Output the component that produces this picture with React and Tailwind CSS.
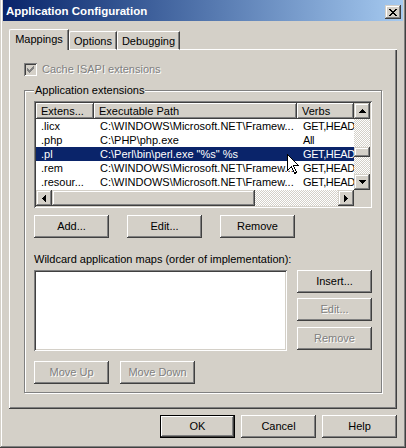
import React from "react";

const RAISED =
  "shadow-[inset_-1px_-1px_0_#404040,inset_1px_1px_0_#fff,inset_-2px_-2px_0_#808080]";
const SCROLLBTN =
  "shadow-[inset_-1px_-1px_0_#404040,inset_1px_1px_0_#d4d0c8,inset_-2px_-2px_0_#808080,inset_2px_2px_0_#fff]";
const SUNKEN =
  "shadow-[inset_1px_1px_0_#808080,inset_-1px_-1px_0_#fff,inset_2px_2px_0_#404040,inset_-2px_-2px_0_#d4d0c8]";
const CHECKER =
  "bg-[image:repeating-conic-gradient(#fff_0%_25%,#d4d0c8_0%_50%)] bg-[length:2px_2px]";
const DISABLED = "text-[#808080] [text-shadow:1px_1px_0_#fff]";

const rows = [
  [".licx", "C:\\WINDOWS\\Microsoft.NET\\Framew...", "GET,HEAD"],
  [".php", "C:\\PHP\\php.exe", "All"],
  [".pl", 'C:\\Perl\\bin\\perl.exe "%s" %s', "GET,HEAD"],
  [".rem", "C:\\WINDOWS\\Microsoft.NET\\Framew...", "GET,HEAD"],
  [".resour...", "C:\\WINDOWS\\Microsoft.NET\\Framew...", "GET,HEAD"],
];

const Btn = ({ children, disabled, def, className = "" }) => (
  <div
    className={`h-[23px] w-[75px] flex items-center justify-center ${RAISED} ${
      def ? "border border-black" : ""
    } ${disabled ? DISABLED : "text-black"} ${className}`}
  >
    {children}
  </div>
);

const Arrow = ({ dir }) => {
  const d = {
    up: "M3 0H4V1H5V2H6V3H7V4H0V3H1V2H2V1H3Z",
    down: "M0 0H7V1H6V2H5V3H4V4H3V3H2V2H1V1H0Z",
    left: "M3 0H4V7H3V6H2V5H1V4H0V3H1V2H2V1H3Z",
    right: "M0 0H1V1H2V2H3V3H4V4H3V5H2V6H1V7H0Z",
  }[dir];
  const vert = dir === "up" || dir === "down";
  return (
    <div className={`w-[16px] h-[16px] shrink-0 bg-[#d4d0c8] flex items-center justify-center ${SCROLLBTN}`}>
      <svg width={vert ? 7 : 4} height={vert ? 4 : 7} shapeRendering="crispEdges">
        <path d={d} fill="#000" />
      </svg>
    </div>
  );
};

const Tab = ({ label, selected, w }) => (
  <div
    className={`${w} flex items-center justify-center bg-[#d4d0c8] border-t border-l border-white border-r border-r-[#404040] rounded-tl-[2px] shadow-[inset_-1px_0_0_#808080] ${
      selected ? "h-[21px] pb-[2px]" : "h-[19px] border-b pt-[1px]"
    }`}
  >
    {label}
  </div>
);

const App = () => {
  return (
    <div className="relative w-[406px] h-[448px] overflow-hidden bg-[#d4d0c8] text-[11px] leading-[13px] text-black font-['Liberation_Sans',Arial,sans-serif] shadow-[inset_-1px_-1px_0_#404040,inset_1px_0_0_#d4d0c8,inset_-2px_-2px_0_#808080,inset_2px_0_0_#fff]">
      {/* title bar */}
      <div className="mx-[3px] h-[21px] flex justify-between bg-linear-to-r from-[#0a246a] to-[#a6caf0]">
        <div className="pl-[3px] pt-[1px] flex items-center text-white font-bold text-[11.5px]">
          Application Configuration
        </div>
        <div className={`mt-[5px] mr-[2px] w-[16px] h-[14px] bg-[#d4d0c8] flex items-center justify-center ${SCROLLBTN}`}>
          <svg width="8" height="7" shapeRendering="crispEdges">
            <g fill="#000">
              <rect x="0" y="0" width="2" height="1" />
              <rect x="6" y="0" width="2" height="1" />
              <rect x="1" y="1" width="2" height="1" />
              <rect x="5" y="1" width="2" height="1" />
              <rect x="2" y="2" width="4" height="1" />
              <rect x="3" y="3" width="2" height="1" />
              <rect x="2" y="4" width="4" height="1" />
              <rect x="1" y="5" width="2" height="1" />
              <rect x="5" y="5" width="2" height="1" />
              <rect x="0" y="6" width="2" height="1" />
              <rect x="6" y="6" width="2" height="1" />
            </g>
          </svg>
        </div>
      </div>

      <div className="px-[9px]">
        {/* tabs */}
        <div className="mt-[8px] h-[21px] flex items-end">
          <Tab label="Mappings" selected w="w-[60px]" />
          <Tab label="Options" w="w-[48px]" />
          <Tab label="Debugging" w="w-[63px]" />
          <div className="flex-1 h-[1px] bg-white" />
        </div>

        {/* tab panel */}
        <div className="h-[359px] flex flex-col px-[15px] pt-[13px] shadow-[inset_-1px_-1px_0_#404040,inset_1px_0_0_#fff,inset_-2px_-2px_0_#808080]">
          <div className="flex items-center gap-[5px] h-[13px]">
            <div className={`w-[13px] h-[13px] bg-[#d4d0c8] flex items-center justify-center ${SUNKEN}`}>
              <svg width="7" height="7" shapeRendering="crispEdges">
                <g fill="#808080">
                  <rect x="6" y="0" width="1" height="1" />
                  <rect x="5" y="1" width="2" height="1" />
                  <rect x="0" y="2" width="1" height="1" />
                  <rect x="4" y="2" width="3" height="1" />
                  <rect x="0" y="3" width="2" height="1" />
                  <rect x="3" y="3" width="3" height="1" />
                  <rect x="0" y="4" width="5" height="1" />
                  <rect x="1" y="5" width="3" height="1" />
                  <rect x="2" y="6" width="1" height="1" />
                </g>
              </svg>
            </div>
            <span className={DISABLED}>Cache ISAPI extensions</span>
          </div>

          <fieldset className="mt-[8px] min-w-0 border border-[#808080] shadow-[1px_1px_0_#fff,inset_1px_1px_0_#fff] px-[9px] pt-[4px] pb-[8px]">
            <legend className="px-[1px] bg-[#d4d0c8] leading-[13px]">Application extensions</legend>

            {/* list view */}
            <div className={`w-[338px] h-[107px] p-[2px] bg-white ${SUNKEN}`}>
              <div className="grid grid-cols-[318px_16px] grid-rows-[87px_16px] h-full">
                <div className="overflow-hidden">
                  <div className="flex h-[16px]">
                    {[
                      ["Extens...", "w-[58px]"],
                      ["Executable Path", "w-[203px]"],
                      ["Verbs", "w-[57px]"],
                    ].map(([h, w]) => (
                      <div key={h} className={`${w} shrink-0 bg-[#d4d0c8] pl-[5px] flex items-center whitespace-nowrap overflow-hidden ${RAISED}`}>
                        {h}
                      </div>
                    ))}
                  </div>
                  {rows.map((r, i) => {
                    const sel = i === 2;
                    return (
                      <div
                        key={i}
                        className={`flex h-[14px] items-center whitespace-nowrap ${
                          sel ? "bg-[#0a246a] text-white" : ""
                        }`}
                      >
                        <div className="w-[58px] shrink-0 pl-[5px] overflow-hidden">{r[0]}</div>
                        <div className="w-[203px] shrink-0 pl-[6px] overflow-hidden">{r[1]}</div>
                        <div className="w-[57px] shrink-0 pl-[6px] overflow-hidden tracking-[-0.4px]">{r[2]}</div>
                      </div>
                    );
                  })}
                </div>

                {/* vertical scrollbar */}
                <div className="flex flex-col">
                  <Arrow dir="up" />
                  <div className={`h-[28px] ${CHECKER}`} />
                  <div className={`h-[10px] bg-[#d4d0c8] ${SCROLLBTN}`} />
                  <div className={`h-[17px] ${CHECKER}`} />
                  <Arrow dir="down" />
                </div>

                {/* horizontal scrollbar */}
                <div className="flex">
                  <Arrow dir="left" />
                  <div className={`w-[203px] bg-[#d4d0c8] ${SCROLLBTN}`} />
                  <div className={`flex-1 ${CHECKER}`} />
                  <Arrow dir="right" />
                </div>
                <div className="bg-[#d4d0c8]" />
              </div>
            </div>

            <div className="mt-[7px] flex gap-[18px]">
              <Btn>Add...</Btn>
              <Btn>Edit...</Btn>
              <Btn>Remove</Btn>
            </div>

            <div className="mt-[15px] h-[13px]">Wildcard application maps (order of implementation):</div>

            <div className="mt-[4px] flex">
              <div className={`w-[253px] h-[81px] bg-white ${SUNKEN}`} />
              <div className="ml-[10px] flex flex-col">
                <Btn>Insert...</Btn>
                <Btn disabled className="mt-[5px]">Edit...</Btn>
                <Btn disabled className="mt-[6px]">Remove</Btn>
              </div>
            </div>

            <div className="mt-[10px] flex gap-[11px]">
              <Btn disabled>Move Up</Btn>
              <Btn disabled>Move Down</Btn>
            </div>
          </fieldset>
        </div>

        <div className="mt-[6px] flex justify-end gap-[6px]">
          <Btn def>OK</Btn>
          <Btn>Cancel</Btn>
          <Btn>Help</Btn>
        </div>
      </div>

      {/* mouse pointer over the list */}
      <svg className="absolute left-[287px] top-[154px]" width="12" height="20" shapeRendering="crispEdges">
        <path d="M0.5 0.5V16.5L4.5 12.5L7.5 19.5L9.5 18.5L6.5 11.5H11.5Z" fill="#fff" stroke="#000" strokeWidth="1" />
      </svg>
    </div>
  );
};

export default App;
